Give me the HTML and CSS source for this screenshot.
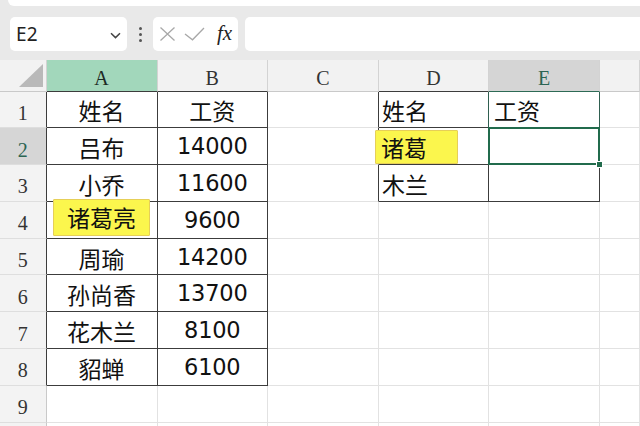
FILE: index.html
```html
<!DOCTYPE html>
<html lang="zh-CN">
<head>
<meta charset="utf-8">
<title>Sheet</title>
<link rel="stylesheet" href="styles.css">
</head>
<body>
<div class="app">
  <div class="ribbon"></div>
  <div class="fbar">
    <div class="namebox">
      <span class="ref">E2</span>
      <svg class="chev" width="11" height="7" viewBox="0 0 11 7"><path d="M1 1.2 L5.5 5.6 L10 1.2" fill="none" stroke="#444" stroke-width="1.5"/></svg>
    </div>
    <div class="dots"><i></i><i></i><i></i></div>
    <div class="fxbox">
      <svg class="ico" width="17" height="16" viewBox="0 0 17 16"><path d="M1.5 1.5 L15.5 14.5 M15.5 1.5 L1.5 14.5" fill="none" stroke="#a8a8a8" stroke-width="1.3"/></svg>
      <svg class="ico" width="21" height="14" viewBox="0 0 21 14"><path d="M1 7 L8.5 12.8 L20 1" fill="none" stroke="#a8a8a8" stroke-width="1.3"/></svg>
      <span class="fx">fx</span>
    </div>
    <div class="finput"></div>
  </div>
  <div class="sheet">
    <!-- header row -->
    <div class="c h corner"><svg width="24" height="23" viewBox="0 0 24 23"><path d="M24 0 L24 23 L0 23 Z" fill="#b9b9b9"/></svg></div>
    <div class="c h hsel bb">A</div>
    <div class="c h bb">B</div>
    <div class="c h">C</div>
    <div class="c h bb">D</div>
    <div class="c h hact">E</div>
    <div class="c h"></div>
    <!-- row 1 -->
    <div class="c r br">1</div>
    <div class="c cj br bb">姓名</div>
    <div class="c cj br bb">工资</div>
    <div class="c br"></div>
    <div class="c cj l br-t bb">姓名</div>
    <div class="c cj l le br-t bb">工资</div>
    <div class="c"></div>
    <!-- row 2 -->
    <div class="c r br ract">2</div>
    <div class="c cj br bb">吕布</div>
    <div class="c n br bb">14000</div>
    <div class="c br"></div>
    <div class="c cj l br bb"><span class="hl hl-d">诸葛</span></div>
    <div class="c sel br bb"></div>
    <div class="c"></div>
    <!-- row 3 -->
    <div class="c r br">3</div>
    <div class="c cj br bb">小乔</div>
    <div class="c n br bb">11600</div>
    <div class="c br"></div>
    <div class="c cj l br bb">木兰</div>
    <div class="c br bb"></div>
    <div class="c"></div>
    <!-- row 4 -->
    <div class="c r br">4</div>
    <div class="c cj br bb"><span class="hl hl-a">诸葛亮</span></div>
    <div class="c n br bb">9600</div>
    <div class="c"></div>
    <div class="c"></div>
    <div class="c"></div>
    <div class="c"></div>
    <!-- row 5 -->
    <div class="c r br">5</div>
    <div class="c cj br bb">周瑜</div>
    <div class="c n br bb">14200</div>
    <div class="c"></div>
    <div class="c"></div>
    <div class="c"></div>
    <div class="c"></div>
    <!-- row 6 -->
    <div class="c r br">6</div>
    <div class="c cj br bb">孙尚香</div>
    <div class="c n br bb">13700</div>
    <div class="c"></div>
    <div class="c"></div>
    <div class="c"></div>
    <div class="c"></div>
    <!-- row 7 -->
    <div class="c r br">7</div>
    <div class="c cj br bb">花木兰</div>
    <div class="c n br bb">8100</div>
    <div class="c"></div>
    <div class="c"></div>
    <div class="c"></div>
    <div class="c"></div>
    <!-- row 8 -->
    <div class="c r br">8</div>
    <div class="c cj br bb">貂蝉</div>
    <div class="c n br bb">6100</div>
    <div class="c"></div>
    <div class="c"></div>
    <div class="c"></div>
    <div class="c"></div>
    <!-- row 9 -->
    <div class="c r">9</div>
    <div class="c"></div>
    <div class="c"></div>
    <div class="c"></div>
    <div class="c"></div>
    <div class="c"></div>
    <div class="c"></div>
    <!-- row 10 (only its top edge is visible) -->
    <div class="c r"></div>
    <div class="c"></div>
    <div class="c"></div>
    <div class="c"></div>
    <div class="c"></div>
    <div class="c"></div>
    <div class="c"></div>
  </div>
</div>
</body>
</html>
```
FILE: styles.css
```css
html, body {
  margin: 0;
  padding: 0;
}
body {
  background: #e9e9e9;
  width: 640px;
  height: 426px;
  overflow: hidden;
  font-family: "Noto Sans CJK SC", "Noto Sans", sans-serif;
}
.app {
  display: flex;
  flex-direction: column;
  height: 426px;
}
.ribbon {
  height: 6px;
  margin-left: 8px;
  background: #ffffff;
  border-radius: 0 0 0 6px;
}
.fbar {
  display: flex;
  align-items: center;
  padding: 11px 0 0 10px;
  height: 34px;
}
.namebox {
  box-sizing: border-box;
  width: 117px;
  height: 34px;
  background: #fff;
  border-radius: 5px;
  display: flex;
  align-items: center;
  justify-content: space-between;
  padding: 0 6px 0 6px;
}
.ref {
  font-family: "Noto Sans", sans-serif;
  font-size: 19px;
  color: #222;
  letter-spacing: 0.3px;
}
.chev {
  margin-top: 2px;
}
.dots {
  display: flex;
  flex-direction: column;
  gap: 3px;
  margin: 0 11px 0 12px;
}
.dots i {
  display: block;
  width: 3px;
  height: 3px;
  border-radius: 50%;
  background: #555;
}
.fxbox {
  box-sizing: border-box;
  width: 85px;
  height: 34px;
  background: #fff;
  border-radius: 5px;
  display: flex;
  align-items: center;
  padding-left: 6px;
}
.fxbox .ico:first-child {
  margin-right: 8px;
}
.fx {
  font-family: "Liberation Serif", serif;
  font-style: italic;
  font-size: 21px;
  color: #222;
  margin-left: 12px;
  margin-top: -2px;
}
.finput {
  flex: 1;
  height: 34px;
  margin-left: 7px;
  background: #fff;
  border-radius: 5px 0 0 5px;
}
.sheet {
  margin-top: 9px;
  flex: 1;
  overflow: hidden;
  background: #fff;
  display: grid;
  grid-template-columns: 46.5px 111px 110.5px 111px 110px 111px 1fr;
  grid-template-rows: 31.5px repeat(10, 36.8px);
}
.c {
  box-sizing: border-box;
  border-right: 1px solid #e2e2e2;
  border-bottom: 1px solid #e2e2e2;
  display: flex;
  align-items: center;
  justify-content: center;
  color: #111;
  white-space: nowrap;
  min-width: 0;
}
.h {
  background: #f2f2f2;
  border-right-color: #d3d3d3;
  border-bottom-color: #c9c9c9;
  font-family: "Liberation Serif", serif;
  font-size: 20px;
  color: #333;
  padding-top: 6px;
}
.corner {
  justify-content: flex-end;
  align-items: flex-end;
  padding: 0 3px 4px 0;
}
.corner svg {
  display: block;
}
.hsel {
  background: #a2d7bb;
  color: #1d2b24;
}
.hact {
  background: #d5d5d5;
  color: #2c6553;
  border-bottom: 1px solid #2d6a55;
}
.r {
  background: #f3f3f3;
  border-right-color: #c9c9c9;
  border-bottom-color: #dedede;
  font-family: "Liberation Serif", serif;
  font-size: 20px;
  color: #333;
  padding-top: 8px;
}
.ract {
  background: #d6d6d6;
  color: #2c6553;
}
.cj {
  font-size: 23px;
  padding-top: 2px;
}
.n {
  font-family: "DejaVu Sans", sans-serif;
  font-size: 22.5px;
  letter-spacing: -0.2px;
}
.l {
  justify-content: flex-start;
  padding-left: 3px;
}
.le {
  padding-left: 5px;
}
.br {
  border-right-color: #3c3c3c;
}
.br-t {
  border-right-color: #2f5f50;
}
.bb {
  border-bottom-color: #3c3c3c;
}
.hl {
  background: #fbf64d;
  border: 1px solid #e6cf58;
  border-radius: 1px;
  box-sizing: border-box;
}
.hl-a {
  width: 97px;
  height: 37px;
  line-height: 35px;
  text-align: center;
  margin-bottom: 5px;
  margin-top: -2px;
}
.hl-d {
  height: 34px;
  line-height: 32px;
  padding: 0 30px 0 5px;
  margin-left: -7px;
}
.sel {
  position: relative;
}
.sel::after {
  content: "";
  position: absolute;
  top: -1.5px;
  left: -1.5px;
  right: -1px;
  bottom: -1px;
  border: 2px solid #216b4c;
}
.sel::before {
  content: "";
  position: absolute;
  right: -4px;
  bottom: -4px;
  width: 5px;
  height: 5px;
  background: #216b4c;
  border: 1px solid #fff;
  z-index: 2;
}
```
